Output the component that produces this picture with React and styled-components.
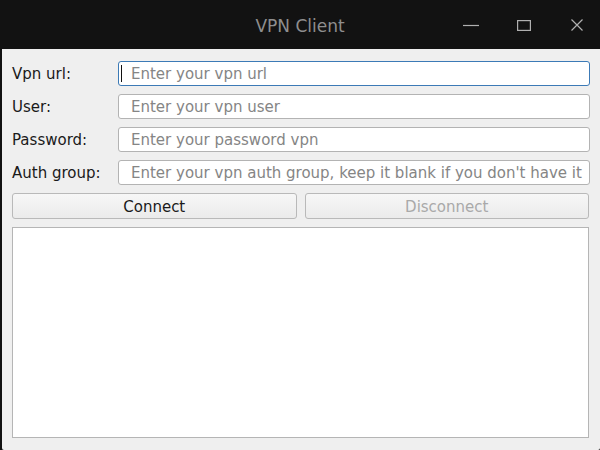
import React from "react";
import styled, { createGlobalStyle } from "styled-components";

const Global = createGlobalStyle`
  html, body { margin: 0; padding: 0; background: #111111; }
  body { width: 600px; height: 450px; overflow: hidden; font-family: "DejaVu Sans", "Noto Sans", sans-serif; }
  * { box-sizing: border-box; }
`;

const Window = styled.div`
  width: 600px;
  height: 450px;
  display: flex;
  flex-direction: column;
  background: #111111;
`;

const TitleBar = styled.div`
  height: 49px;
  flex: none;
  position: relative;
  display: flex;
  align-items: center;
  justify-content: center;
  background: #121212;
`;

const Title = styled.div`
  color: #8e8e8e;
  font-size: 17px;
  margin-top: 3px;
`;

const Controls = styled.div`
  position: absolute;
  right: 11px;
  top: 0;
  height: 49px;
  display: flex;
  align-items: center;
  gap: 29px;
`;

const CtrlIcon = styled.svg`
  width: 24px;
  height: 24px;
  display: block;
`;

const Body = styled.div`
  flex: 1;
  margin-left: 2px;
  background: #efefef;
  border-radius: 0 0 2px 2px;
  padding: 12px 10px 12px 10px;
  display: flex;
  flex-direction: column;
  gap: 8px;
`;

const Form = styled.div`
  display: grid;
  grid-template-columns: 100px 1fr;
  column-gap: 6px;
  row-gap: 8px;
  align-items: center;
`;

const Label = styled.label`
  font-size: 15px;
  color: #1a1a1a;
`;

const Field = styled.div`
  position: relative;
  height: 25px;
`;

const Input = styled.input`
  width: 100%;
  height: 25px;
  border: 1px solid ${(p) => (p.$focused ? "#3c7ab6" : "#b3b3b3")};
  border-radius: 3px;
  background: #ffffff;
  padding: 0 0 0 12px;
  font-family: "DejaVu Sans", sans-serif;
  font-size: 15px;
  color: #222;
  outline: none;
  &::placeholder { color: #858585; }
`;

const Caret = styled.span`
  position: absolute;
  left: 3px;
  top: 4px;
  width: 1px;
  height: 17px;
  background: #111;
`;

const Buttons = styled.div`
  display: grid;
  grid-template-columns: 1fr 1fr;
  gap: 8px;
  padding-right: 1px;
`;

const Button = styled.button`
  height: 26px;
  border: 1px solid #b9b9b9;
  border-radius: 3px;
  background: linear-gradient(#f7f7f7, #ebebeb);
  font-family: "DejaVu Sans", sans-serif;
  font-size: 15px;
  color: ${(p) => (p.disabled ? "#a9a9a9" : "#1a1a1a")};
  padding: 2px 0 0 0;
`;

const Log = styled.div`
  flex: 1;
  margin-right: 1px;
  background: #ffffff;
  border: 1px solid #b5b5b5;
`;

const fields = [
  { label: "Vpn url:", ph: "Enter your vpn url", focused: true },
  { label: "User:", ph: "Enter your vpn user" },
  { label: "Password:", ph: "Enter your password vpn" },
  { label: "Auth group:", ph: "Enter your vpn auth group, keep it blank if you don't have it" },
];

export default function App() {
  return (
    <Window>
      <Global />
      <TitleBar>
        <Title>VPN Client</Title>
        <Controls>
          <CtrlIcon viewBox="0 0 24 24">
            <path d="M4 12.5h16" stroke="#b0b0b0" strokeWidth="1.2" fill="none" />
          </CtrlIcon>
          <CtrlIcon viewBox="0 0 24 24">
            <rect x="5.6" y="7.6" width="12.8" height="9.8" stroke="#b0b0b0" strokeWidth="1.2" fill="none" />
          </CtrlIcon>
          <CtrlIcon viewBox="0 0 24 24">
            <path d="M6.5 6.5l11 11M17.5 6.5l-11 11" stroke="#b0b0b0" strokeWidth="1.2" fill="none" />
          </CtrlIcon>
        </Controls>
      </TitleBar>
      <Body>
        <Form>
          {fields.map((f) => (
            <React.Fragment key={f.label}>
              <Label>{f.label}</Label>
              <Field>
                <Input placeholder={f.ph} $focused={f.focused} readOnly />
                {f.focused && <Caret />}
              </Field>
            </React.Fragment>
          ))}
        </Form>
        <Buttons>
          <Button>Connect</Button>
          <Button disabled>Disconnect</Button>
        </Buttons>
        <Log />
      </Body>
    </Window>
  );
}
